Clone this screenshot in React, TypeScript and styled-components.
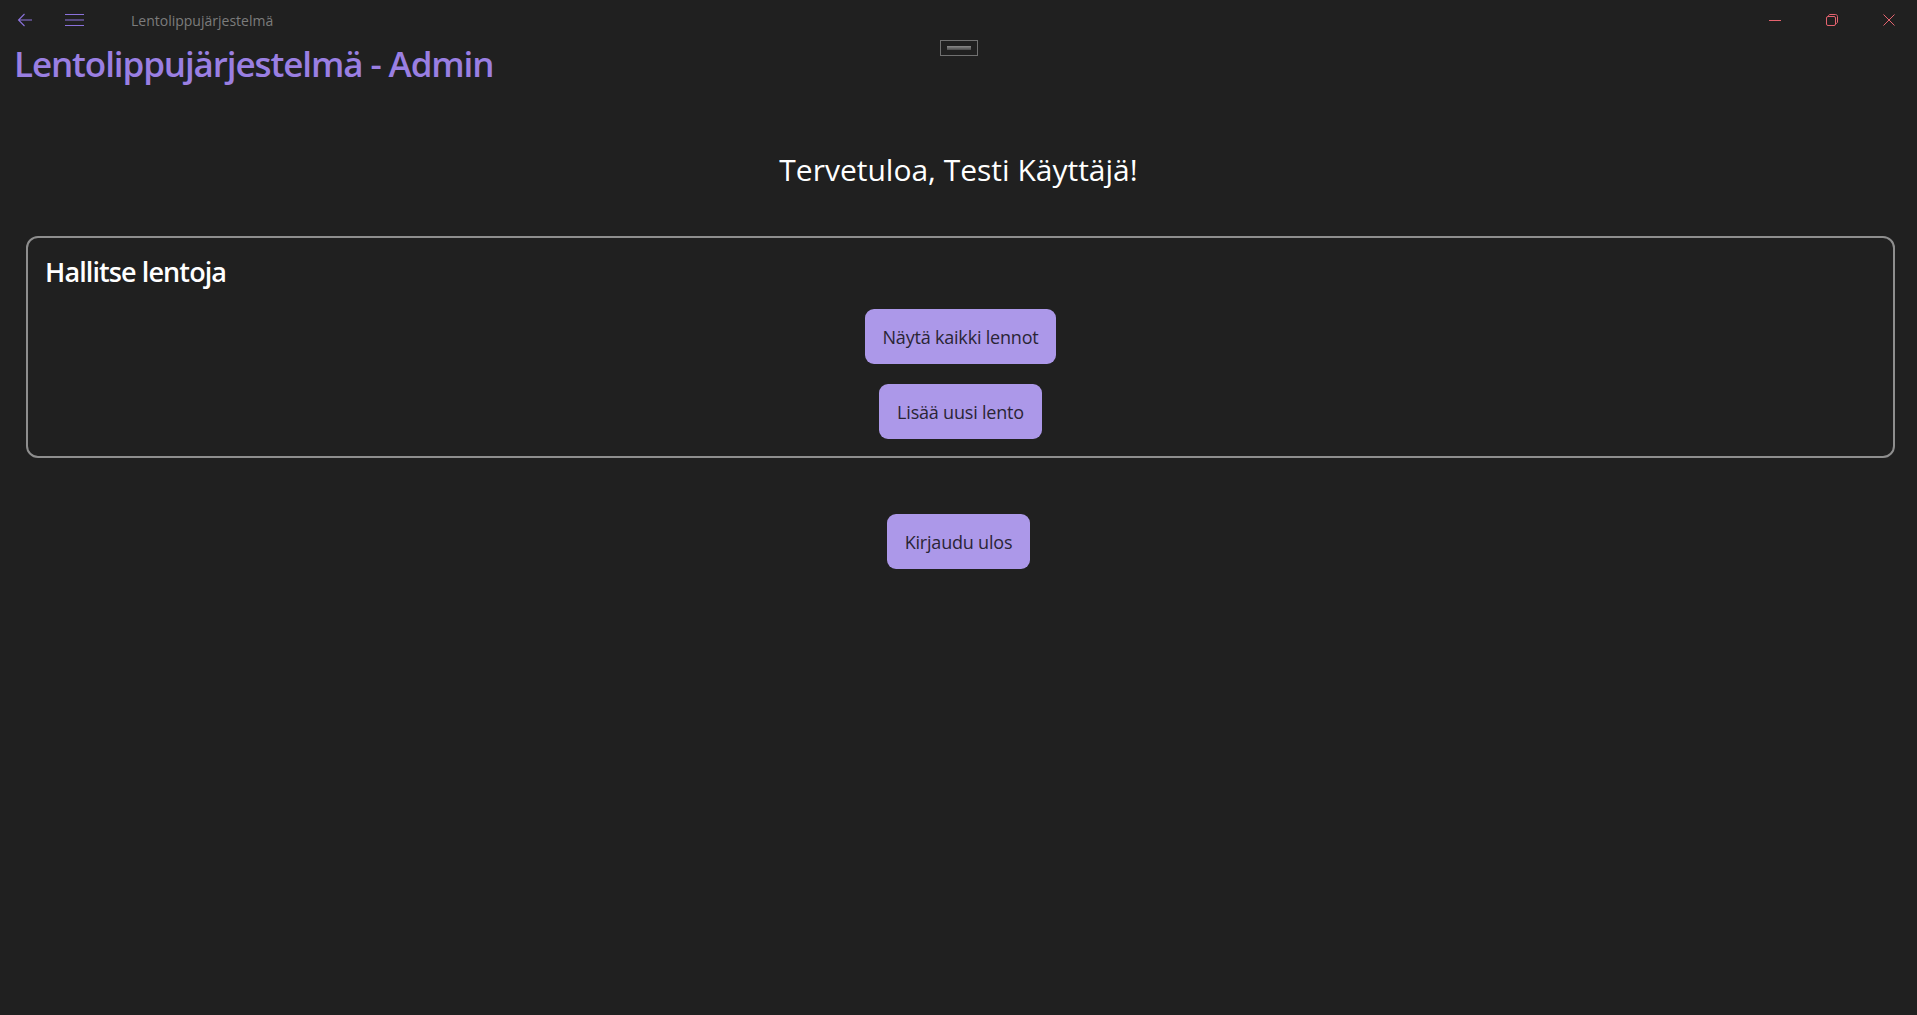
import React from "react";
import styled, { createGlobalStyle } from "styled-components";

const GlobalStyle = createGlobalStyle`
  html, body {
    margin: 0;
    padding: 0;
    background: #202020;
  }
  body {
    font-family: "Open Sans", "Noto Sans", sans-serif;
    color: #ffffff;
  }
`;

const Page = styled.div`
  position: relative;
  min-height: 1015px;
  background: #202020;
  display: flex;
  flex-direction: column;
`;

const TitleBar = styled.div`
  height: 40px;
  display: flex;
  align-items: center;
  padding-left: 17px;
`;

const IconButton = styled.button<{ $width: number }>`
  width: ${(p) => p.$width}px;
  height: 40px;
  padding: 0;
  border: none;
  background: transparent;
  display: flex;
  align-items: center;
  justify-content: flex-start;
  color: #8b72db;
`;

const AppName = styled.span`
  margin-left: 26px;
  font-family: "Open Sans", sans-serif;
  font-size: 14px;
  color: #7c7c7c;
`;

const Spacer = styled.div`
  flex: 1;
`;

const WindowControls = styled.div`
  display: flex;
  align-items: center;
  height: 40px;
`;

const WinButton = styled.div`
  width: 57px;
  height: 40px;
  display: flex;
  align-items: center;
  justify-content: center;
  color: #e5636f;
`;

const Grip = styled.div`
  position: absolute;
  top: 40px;
  left: 940px;
  width: 36px;
  height: 14px;
  border: 1px solid #707070;
  display: flex;
  align-items: center;
  justify-content: center;
`;

const GripBar = styled.div`
  width: 24px;
  height: 4px;
  background: linear-gradient(#8a8a8a, #4a4a4a);
`;

const AppTitle = styled.h1`
  margin: 6px 0 0 14px;
  font-family: "Open Sans", sans-serif;
  font-weight: 600;
  font-size: 35px;
  line-height: 35px;
  letter-spacing: -1.1px;
  color: #9a7fe2;
`;

const Welcome = styled.h2`
  margin: 74px 0 0 0;
  text-align: center;
  font-family: "Open Sans", sans-serif;
  font-weight: 400;
  font-size: 30px;
  line-height: 30px;
  color: #ffffff;
`;

const Section = styled.section`
  margin: 51px 22px 0 26px;
  border: 2px solid #8e8e8e;
  border-radius: 12px;
  padding: 20px 17px 17px 17px;
  display: flex;
  flex-direction: column;
`;

const SectionTitle = styled.h3`
  margin: 0;
  font-family: "Open Sans", sans-serif;
  font-weight: 600;
  font-size: 27px;
  line-height: 28px;
  letter-spacing: -0.9px;
  color: #ffffff;
`;

const ButtonStack = styled.div`
  margin-top: 23px;
  display: flex;
  flex-direction: column;
  align-items: center;
  gap: 20px;
`;

const ActionButton = styled.button`
  height: 55px;
  padding: 0 18px;
  border: none;
  border-radius: 9px;
  background: #ac98e9;
  color: #2a2535;
  font-family: "Open Sans", sans-serif;
  font-size: 18px;
  letter-spacing: -0.2px;
  cursor: pointer;
`;

const LogoutRow = styled.div`
  margin-top: 56px;
  display: flex;
  justify-content: center;
`;

export default function App() {
  return (
    <>
      <GlobalStyle />
      <Page>
        <TitleBar>
          <IconButton $width={48} aria-label="Takaisin">
            <svg width="16" height="16" viewBox="0 0 16 16" fill="none" stroke="currentColor" strokeWidth="1.1">
              <path d="M15 8H1.5M7.5 2L1.5 8l6 6" />
            </svg>
          </IconButton>
          <IconButton $width={40} aria-label="Valikko">
            <svg width="20" height="16" viewBox="0 0 20 16" fill="none" stroke="currentColor" strokeWidth="1.1">
              <path d="M0 2.5h19M0 8h19M0 13.5h19" />
            </svg>
          </IconButton>
          <AppName>Lentolippujärjestelmä</AppName>
          <Spacer />
          <WindowControls>
            <WinButton>
              <svg width="12" height="12" viewBox="0 0 12 12" stroke="currentColor" strokeWidth="1">
                <path d="M0 6.5h12" />
              </svg>
            </WinButton>
            <WinButton>
              <svg width="12" height="12" viewBox="0 0 12 12" fill="none" stroke="currentColor" strokeWidth="1">
                <rect x="0.5" y="2.5" width="9" height="9" rx="1.5" />
                <path d="M2.5 2.5V2c0-.8.7-1.5 1.5-1.5h5.5c1.1 0 2 .9 2 2V8c0 .8-.7 1.5-1.5 1.5" />
              </svg>
            </WinButton>
            <WinButton>
              <svg width="12" height="12" viewBox="0 0 12 12" stroke="currentColor" strokeWidth="1">
                <path d="M0.5 0.5l11 11M11.5 0.5l-11 11" />
              </svg>
            </WinButton>
          </WindowControls>
        </TitleBar>
        <Grip>
          <GripBar />
        </Grip>
        <AppTitle>Lentolippujärjestelmä - Admin</AppTitle>
        <Welcome>Tervetuloa, Testi Käyttäjä!</Welcome>
        <Section>
          <SectionTitle>Hallitse lentoja</SectionTitle>
          <ButtonStack>
            <ActionButton>Näytä kaikki lennot</ActionButton>
            <ActionButton>Lisää uusi lento</ActionButton>
          </ButtonStack>
        </Section>
        <LogoutRow>
          <ActionButton>Kirjaudu ulos</ActionButton>
        </LogoutRow>
      </Page>
    </>
  );
}
